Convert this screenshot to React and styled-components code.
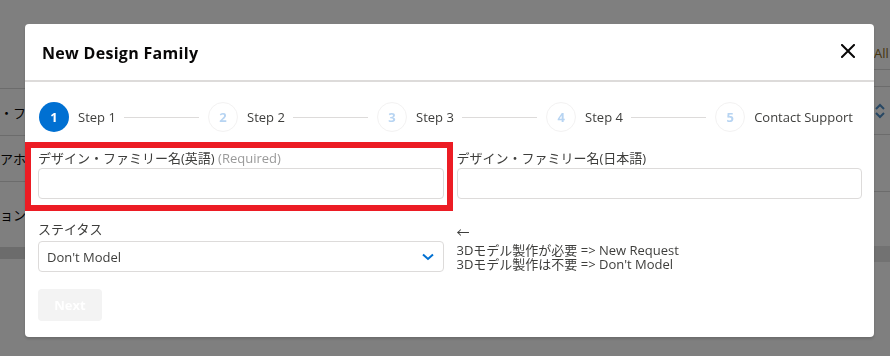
import React from 'react';
import styled, { createGlobalStyle } from 'styled-components';

const GlobalStyle = createGlobalStyle`
  html, body {
    margin: 0;
    padding: 0;
    width: 890px;
    height: 356px;
    overflow: hidden;
    background: #ffffff;
    font-family: "Open Sans", "Noto Sans CJK JP", sans-serif;
  }
`;

const Page = styled.div`
  display: grid;
  grid-template-columns: 25px 1fr 16px;
  height: 356px;
  color: #080707;
  font-size: 13px;
`;

const Column = styled.div`
  display: flex;
  flex-direction: column;
  overflow: hidden;
`;

const BgRow = styled.div`
  display: flex;
  align-items: center;
  height: ${(p) => p.h}px;
  border-bottom: ${(p) => (p.line ? '1px solid #d8d8d8' : 'none')};
  background: ${(p) => p.bg || 'transparent'};
  white-space: nowrap;
  overflow: hidden;
  color: ${(p) => p.tone || '#080707'};
`;

const Overlay = styled.div`
  position: fixed;
  inset: 0;
  background: rgba(0, 0, 0, 0.5);
  display: flex;
  align-items: flex-start;
  padding: 24px 0 0 25px;
`;

const Modal = styled.div`
  width: 849px;
  background: #ffffff;
  border-radius: 4px;
  box-shadow: 0 2px 3px rgba(0, 0, 0, 0.16);
  padding-bottom: 16px;
`;

const Header = styled.div`
  display: flex;
  align-items: center;
  justify-content: space-between;
  height: 56px;
  padding: 0 16px 0 17px;
  border-bottom: 2px solid #dddbda;
`;

const Title = styled.h2`
  margin: 2px 0 0;
  font-size: 16px;
  font-weight: 700;
  color: #080707;
  letter-spacing: 0.3px;
`;

const CloseButton = styled.button`
  display: flex;
  align-items: center;
  justify-content: center;
  width: 20px;
  height: 20px;
  padding: 0;
  margin-top: -2px;
  border: none;
  background: transparent;
`;

const Body = styled.div`
  padding: 20px 12px 0 13px;
`;

const Stepper = styled.div`
  display: flex;
  align-items: center;
  padding: 0 9px 0 1px;
`;

const Step = styled.div`
  display: flex;
  align-items: center;
  flex: ${(p) => (p.last ? 'none' : '1')};
`;

const Circle = styled.div`
  width: 30px;
  height: 30px;
  flex: none;
  box-sizing: border-box;
  border-radius: 50%;
  display: flex;
  align-items: center;
  justify-content: center;
  font-size: 13px;
  line-height: 16px;
  font-weight: 700;
  background: ${(p) => (p.active ? '#0070d2' : '#ffffff')};
  color: ${(p) => (p.active ? '#ffffff' : '#b7d4f2')};
  border: ${(p) => (p.active ? 'none' : '1px solid #f3f2f2')};
`;

const StepLabel = styled.span`
  margin-left: 9px;
  font-size: 13px;
  line-height: 16px;
  color: #3e3e3c;
  white-space: nowrap;
`;

const StepLine = styled.div`
  flex: 1;
  height: 1px;
  background: #dddbda;
  margin: 0 9px 0 8px;
`;

const Grid = styled.div`
  display: grid;
  grid-template-columns: 1fr 1fr;
  column-gap: 13px;
  row-gap: 21px;
  margin-top: 17px;
`;

const Field = styled.div`
  position: relative;
  display: flex;
  flex-direction: column;
`;

const Highlight = styled.div`
  position: absolute;
  left: -13px;
  right: -9px;
  top: -7px;
  bottom: -12px;
  border: 6px solid #ec1c24;
  pointer-events: none;
`;

const Label = styled.label`
  font-size: 13px;
  line-height: 18px;
  color: #3e3e3c;
`;

const Hint = styled.span`
  color: #9a9a9a;
`;

const Input = styled.input`
  box-sizing: border-box;
  height: 31px;
  margin-top: 1px;
  border: 1px solid #dddbda;
  border-radius: 4px;
  background: #ffffff;
  padding: 0 8px;
  font: inherit;
`;

const Select = styled.div`
  box-sizing: border-box;
  display: flex;
  align-items: center;
  justify-content: space-between;
  height: 31px;
  margin-top: 3px;
  padding: 0 9px 0 8px;
  border: 1px solid #dddbda;
  border-radius: 4px;
  font-size: 13px;
  color: #3e3e3c;
`;

const Note = styled.div`
  display: flex;
  flex-direction: column;
  padding-top: 3px;
  font-size: 13px;
  color: #3e3e3c;
`;

const Arrow = styled.div`
  line-height: 18px;
  margin-bottom: 2px;
`;

const NoteLine = styled.div`
  line-height: 14px;
  white-space: nowrap;
`;

const NextButton = styled.button`
  margin-top: 17px;
  width: 64px;
  height: 32px;
  border: none;
  border-radius: 4px;
  background: #f3f3f3;
  color: #ffffff;
  font-family: "Open Sans", sans-serif;
  font-size: 13px;
  font-weight: 700;
`;

const steps = ['Step 1', 'Step 2', 'Step 3', 'Step 4', 'Contact Support'];

function CloseIcon() {
  return (
    <svg width="14" height="14" viewBox="0 0 14 14">
      <path d="M1 1 L13 13 M13 1 L1 13" stroke="#080707" strokeWidth="2" strokeLinecap="square" />
    </svg>
  );
}

function Chevron() {
  return (
    <svg width="12" height="8" viewBox="0 0 12 8">
      <path d="M1 1.5 L6 6 L11 1.5" fill="none" stroke="#0070d2" strokeWidth="2" />
    </svg>
  );
}

function SortIcon() {
  return (
    <svg width="12" height="16" viewBox="0 0 12 16">
      <path d="M2 6 L6 2 L10 6 M2 10 L6 14 L10 10" fill="none" stroke="#4f8fc7" strokeWidth="2" />
    </svg>
  );
}

function Background() {
  return (
    <Page>
      <Column>
        <BgRow h={88} line />
        <BgRow h={46} line>・フ</BgRow>
        <BgRow h={45} line>アホ</BgRow>
        <BgRow h={65}>ョン</BgRow>
        <BgRow h={12} bg="#d8d8d8" />
      </Column>
      <Column />
      <Column>
        <BgRow h={36} />
        <BgRow h={33} line tone="#8b6a1a">All</BgRow>
        <BgRow h={16} line />
        <BgRow h={47} line>
          <SortIcon />
        </BgRow>
        <BgRow h={56} line />
        <BgRow h={54} />
        <BgRow h={16} bg="#e4e4e4" />
      </Column>
    </Page>
  );
}

export default function App() {
  return (
    <>
      <GlobalStyle />
      <Background />
      <Overlay>
        <Modal>
          <Header>
            <Title>New Design Family</Title>
            <CloseButton aria-label="Close">
              <CloseIcon />
            </CloseButton>
          </Header>
          <Body>
            <Stepper>
              {steps.map((s, i) => (
                <Step key={s} last={i === steps.length - 1}>
                  <Circle active={i === 0}>{i + 1}</Circle>
                  <StepLabel>{s}</StepLabel>
                  {i < steps.length - 1 ? <StepLine /> : null}
                </Step>
              ))}
            </Stepper>
            <Grid>
              <Field>
                <Highlight />
                <Label>
                  デザイン・ファミリー名(英語) <Hint>(Required)</Hint>
                </Label>
                <Input />
              </Field>
              <Field>
                <Label>デザイン・ファミリー名(日本語)</Label>
                <Input />
              </Field>
              <Field>
                <Label>ステイタス</Label>
                <Select>
                  <span>Don&apos;t Model</span>
                  <Chevron />
                </Select>
              </Field>
              <Note>
                <Arrow>←</Arrow>
                <NoteLine>3Dモデル製作が必要 =&gt; New Request</NoteLine>
                <NoteLine>3Dモデル製作は不要 =&gt; Don&apos;t Model</NoteLine>
              </Note>
            </Grid>
            <NextButton disabled>Next</NextButton>
          </Body>
        </Modal>
      </Overlay>
    </>
  );
}
